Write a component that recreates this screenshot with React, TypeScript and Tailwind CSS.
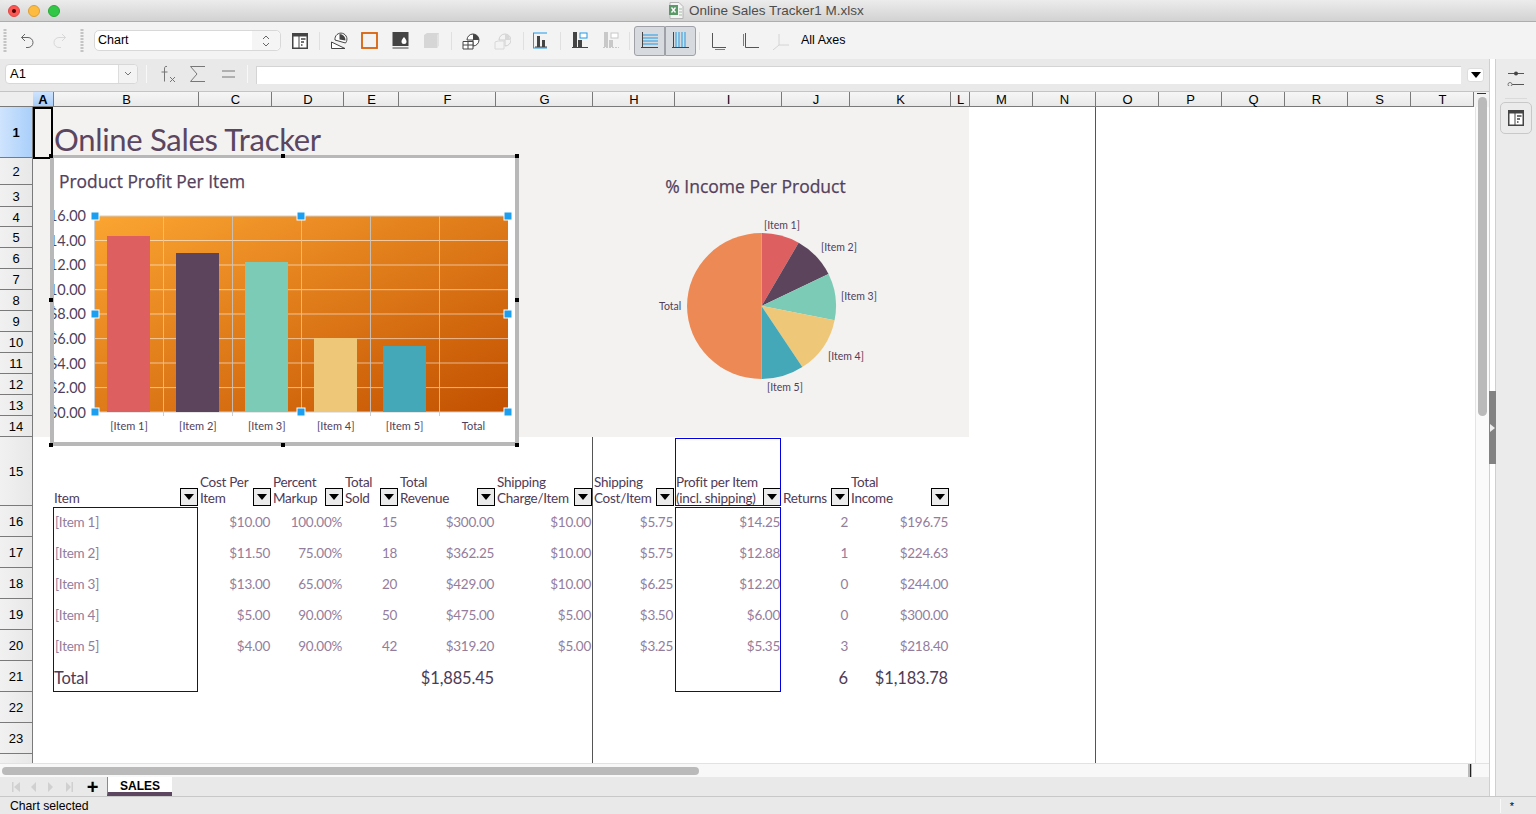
import React from "react";

const SANS = "font-['Liberation_Sans',Arial,sans-serif]";
const cols: [string, number][] = [["A",21],["B",145],["C",73],["D",72],["E",55],["F",97],["G",97],["H",82],["I",107],["J",68],["K",101],["L",19],["M",63],["N",63],["O",63],["P",63],["Q",63],["R",63],["S",63],["T",63]];
const rows = [51,27,22,20,21,21,21,21,21,21,21,21,21,21,69,31,31,31,31,31,31,31,31];

const data = [
  ["[Item 1]","$10.00","100.00%","15","$300.00","$10.00","$5.75","$14.25","2","$196.75"],
  ["[Item 2]","$11.50","75.00%","18","$362.25","$10.00","$5.75","$12.88","1","$224.63"],
  ["[Item 3]","$13.00","65.00%","20","$429.00","$10.00","$6.25","$12.20","0","$244.00"],
  ["[Item 4]","$5.00","90.00%","50","$475.00","$5.00","$3.50","$6.00","0","$300.00"],
  ["[Item 5]","$4.00","90.00%","42","$319.20","$5.00","$3.25","$5.35","3","$218.40"],
];
const headers = [["Item"],["Cost Per","Item"],["Percent","Markup"],["Total","Sold"],["Total","Revenue"],["Shipping","Charge/Item"],["Shipping","Cost/Item"],["Profit per Item","(incl. shipping)"],["Returns"],["Total","Income"]];

function Filter({ last }: { last: boolean }) {
  return (
    <span className={`absolute bottom-0 w-[18px] h-[18px] border border-black bg-[#ebebeb] flex items-center justify-center ${last ? "right-[1px]" : "right-0"}`}>
      <svg width="10" height="6" viewBox="0 0 10 6"><path d="M0 0h10L5 6z" fill="#000" /></svg>
    </span>
  );
}

const Dots = () => (
  <svg width="4" height="24" viewBox="0 0 4 24"><path d="M2 0v24" stroke="#c4c4c4" strokeWidth="3" strokeDasharray="2 1" /></svg>
);
const Sep = ({ c }: { c: string }) => <div className={`w-px h-[18px] bg-[#e0e0e0] ${c}`} />;

const FormatIcon = ({ size = 16 }: { size?: number }) => (
  <svg width={size} height={size} viewBox="0 0 16 16">
    <rect width="16" height="16" fill="#444" />
    <rect x="1.5" y="3.5" width="5" height="11" fill="#fff" />
    <rect x="7.5" y="3.5" width="7" height="11" fill="#fff" />
    <path d="M9 6h4.500M9 9h3M9 12h1.500" stroke="#444" strokeWidth="1.300" />
  </svg>
);

function Ico({ c, w = 18, children }: { c: string; w?: number; children: React.ReactNode }) {
  return <svg className={`shrink-0 ${c}`} width={w} height="18" viewBox={`0 0 ${w} 18`} fill="none">{children}</svg>;
}

function Toolbar() {
  return (
    <div className={`h-[37px] shrink-0 bg-[#f3f3f3] flex items-center ${SANS} text-[12.500px] text-black`}>
      <div className="ml-[3px]"><Dots /></div>
      <Ico c="ml-[11px]"><path d="M7 2 3.500 5.500 7 9" stroke="#666" /><path d="M3.500 5.500H10a5 5 0 0 1 0 10H8" stroke="#666" /></Ico>
      <Ico c="ml-[15px]"><path d="M11 2l3.500 3.500L11 9" stroke="#d8d8d8" /><path d="M14.500 5.500H8a5 5 0 0 0 0 10h2" stroke="#d8d8d8" /></Ico>
      <div className="ml-[11px]"><Dots /></div>
      <div className="ml-[10px] w-[187px] h-[21px] bg-white border border-[#d8d8d8] rounded-[5px] flex items-center pl-[3px] relative">
        <span>Chart</span>
        <span className="ml-auto w-[28px] h-full bg-[#f5f5f5] rounded-r-[5px] flex items-center justify-center">
          <svg width="8" height="14" viewBox="0 0 8 14" fill="none" stroke="#666"><path d="M1 5l3-3 3 3M1 9l3 3 3-3" /></svg>
        </span>
      </div>
      <div className="ml-[11px]"><FormatIcon /></div>
      <Sep c="ml-[11px]" />
      <Ico c="ml-[10px]"><path d="M5 8A6 6 0 1 1 15.500 11z" fill="#fff" stroke="#444" /><path d="M9.500 2A6 6 0 0 1 15.500 8.500L9.500 7.500z" fill="#444" /><path d="M1.500 10 15 16.500H1.500z" fill="#fff" stroke="#444" /></Ico>
      <Ico c="ml-[13px]" w={17}><rect x="1" y="1" width="15" height="15" stroke="#d9610c" strokeWidth="1.800" /></Ico>
      <Ico c="ml-[14px]" w={17}><rect x="0.500" y="0" width="16" height="14" fill="#444" /><path d="M0.500 16h16" stroke="#444" /><path d="M12 5c1.500 2 2.500 3 2.500 4.500a2.500 2.500 0 0 1-5 0C9.500 8 10.500 7 12 5z" fill="#fff" /></Ico>
      <Ico c="ml-[14px]" w={17}><path d="M1 3 4 1h12v12l-2 3H1z" fill="#d6d6d6" /><path d="M14 3v13l2-3V1z" fill="#e2e2e2" /></Ico>
      <Sep c="ml-[11px]" />
      <Ico c="ml-[10px]"><path d="M5 8a6 6 0 1 1 6 6V8z" fill="#fff" stroke="#444" /><path d="M11 2a6 6 0 0 1 6 6h-6z" fill="#444" /><path d="M1 9.500h10v7.500H1zM1 13h10M6 9.500V17" stroke="#444" fill="#fff" /></Ico>
      <Ico c="ml-[13px]"><path d="M6 8a6 6 0 1 1 6 6V8z" stroke="#d0d0d0" /><path d="M12 2a6 6 0 0 1 5 6h-5z" fill="#d8d8d8" /><path d="M2 10l3-1h6v8H2z" stroke="#d8d8d8" /></Ico>
      <Sep c="ml-[12px]" />
      <Ico c="ml-[8px]"><path d="M1 1h14M1 16h14" stroke="#1e9ae8" /><path d="M1.500 1v15" stroke="#1e9ae8" /><path d="M3 15h12" stroke="#444" /><rect x="5" y="4" width="3" height="11" fill="#444" /><rect x="10" y="8" width="3" height="7" fill="#444" /></Ico>
      <Sep c="ml-[10px]" />
      <Ico c="ml-[11px]"><rect x="1" y="0" width="4" height="15" fill="#444" /><rect x="6" y="8" width="4" height="7" fill="#444" /><rect x="8" y="1" width="7" height="5" fill="#fff" stroke="#1e9ae8" /><path d="M0 15.500h16" stroke="#444" /></Ico>
      <Ico c="ml-[13px]"><rect x="1" y="0" width="4" height="15" fill="#c8c8c8" /><rect x="6" y="8" width="4" height="7" fill="#c8c8c8" /><rect x="8" y="1" width="7" height="5" fill="#fff" stroke="#c8c8c8" /><path d="M0 15.500h16" stroke="#c8c8c8" strokeDasharray="2 1" /></Ico>
      <Sep c="ml-[8px]" />
      <div className="ml-[4px] w-[31px] h-[30px] bg-[#d7dade] border border-[#a0a0a8] rounded-l-[3px] flex items-center justify-center">
        <svg width="18" height="18" viewBox="0 0 18 18" fill="none"><path d="M1 3h16M1 6h16M1 9h16M1 12h16" stroke="#1e9ae8" /><path d="M1.500 0v16M0 15.500h17" stroke="#444" /></svg>
      </div>
      <div className="w-[31px] h-[30px] bg-[#d7dade] border border-[#a0a0a8] rounded-r-[3px] flex items-center justify-center">
        <svg width="18" height="18" viewBox="0 0 18 18" fill="none"><path d="M4 0v15M7 0v15M10 0v15M13 0v15" stroke="#1e9ae8" /><path d="M1.500 0v16M0 15.500h17" stroke="#444" /></svg>
      </div>
      <Sep c="ml-[3px]" />
      <Ico c="ml-[11px]"><path d="M1.500 1v14.500H15" stroke="#555" /><path d="M4 17.500h10" stroke="#1e9ae8" /></Ico>
      <Ico c="ml-[12px]"><path d="M4.500 1v14.500H18" stroke="#555" /><path d="M2.500 2v12" stroke="#1e9ae8" /></Ico>
      <Ico c="ml-[12px]"><path d="M8 2v11h10M8 13 2 18" stroke="#d4d4d4" /></Ico>
      <span className="ml-[12px]">All Axes</span>
    </div>
  );
}

function FormulaBar() {
  return (
    <div className={`h-[32px] shrink-0 bg-[#e9e9e9] flex items-center pb-[3px] ${SANS} text-[13px] text-black`}>
      <div className="ml-[5px] w-[133px] h-[20px] bg-white border border-[#d8d8d8] rounded-[4px] flex items-center pl-[4px]">
        <span>A1</span>
        <span className="ml-auto w-[19px] h-full bg-[#f3f3f3] border-l border-[#ddd] flex items-center justify-center rounded-r-[4px]">
          <svg width="8" height="5" viewBox="0 0 8 5" fill="none" stroke="#777"><path d="M1 1l3 3 3-3" /></svg>
        </span>
      </div>
      <div className="ml-[8px] w-px h-[18px] bg-[#f8f8f8]" />
      <svg className="ml-[13px]" width="16" height="18" viewBox="0 0 16 18" fill="none" stroke="#777"><path d="M7 1.500C5 1 4.500 2 4.500 4v12.500M1.500 7h6" /><path d="M10 12l5 5M15 12l-5 5" /></svg>
      <svg className="ml-[13px]" width="17" height="18" viewBox="0 0 17 18" fill="none" stroke="#777"><path d="M16 1.500H1.500L8 9l-6.500 7.500H16" /></svg>
      <svg className="ml-[16px]" width="13" height="10" viewBox="0 0 13 10" fill="none" stroke="#777"><path d="M0 2h13M0 8h13" /></svg>
      <div className="ml-[12px] w-px h-[18px] bg-[#f8f8f8]" />
      <div className="ml-[8px] mt-[3px] w-[1205px] h-[18px] bg-white border-t border-l border-[#d4d4d4]" />
      <div className="ml-[6px] mt-[2px] w-[17px] h-[14px] bg-white rounded-[3px] border border-[#ddd] flex items-center justify-center">
        <svg width="10" height="6" viewBox="0 0 10 6"><path d="M0 0h10L5 6z" fill="#000" /></svg>
      </div>
    </div>
  );
}

function ColumnHeader() {
  return (
    <div className={`h-[16px] shrink-0 flex ${SANS} text-[13px] text-black bg-[#ececec] border-t border-[#c4c4c4]`}>
      <div className="w-[33px] shrink-0 border-b border-[#7a7a7a] bg-[#eee]" />
      {cols.map(([n, w]) => (
        <div key={n} style={{ width: w }} className={`shrink-0 border-r border-b border-[#7a7a7a] flex items-center justify-center leading-none ${n === "A" ? "bg-gradient-to-b from-[#cfe4fd] to-[#a7cdf9] font-bold" : "pl-px bg-gradient-to-b from-[#f6f6f6] to-[#e9e9e9]"}`}>{n}</div>
      ))}
      <div className="flex-1 bg-[#f3f3f3] flex justify-center"><div className="w-[9px] h-px mt-px bg-[#333]" /></div>
    </div>
  );
}

function RowHeader() {
  return (
    <div className={`w-[33px] shrink-0 overflow-hidden ${SANS} text-[13px] text-black`}>
      {rows.map((h, i) => (
        <div key={i} style={{ height: h }} className={`border-b border-r border-[#7a7a7a] flex items-center justify-center pt-[2px] ${i === 0 ? "bg-gradient-to-r from-[#cfe4fd] to-[#a9cffa] font-bold" : "bg-gradient-to-r from-[#f1f1f1] to-[#e8e8e8]"}`}>{i + 1}</div>
      ))}
      <div className="h-[20px] bg-gradient-to-r from-[#f1f1f1] to-[#e8e8e8] border-r border-[#7a7a7a]" />
    </div>
  );
}

function DataTable() {
  const BIG = "text-[16.500px] tracking-[-0.01em] text-[#4f3b57]";
  const cell = (i: number) =>
    i === 0 ? "flex items-center pl-[2px] pt-[2px]" : i === 9 ? "flex items-center justify-end pr-[2px] pt-[2px]" : "flex items-center justify-end pr-px pt-[2px]";
  return (
    <div className="grid grid-cols-[20px_145px_73px_72px_55px_97px_97px_82px_107px_68px_101px] grid-rows-[69px_31px_31px_31px_31px_31px_31px] w-[917px] font-['Lato',sans-serif] text-[13.500px] tracking-[-0.02em]">
      <div />
      {headers.map((h, i) => (
        <div key={i} className={`relative flex flex-col justify-end leading-[16px] text-[#4f3b57] whitespace-nowrap ${i === 0 ? "pl-[1px]" : "pl-[2px]"}`}>
          {h.map((l) => <span key={l}>{l}</span>)}
          <Filter last={i === 9} />
        </div>
      ))}
      {data.map((r) => (
        <React.Fragment key={r[0]}>
          <div />
          {r.map((v, i) => (
            <div key={i} className={`text-[#937d9c] ${cell(i)}`}>{v}</div>
          ))}
        </React.Fragment>
      ))}
      <div />
      <div className={`flex items-center pl-[1px] pt-[4px] ${BIG}`}>Total</div>
      <div /><div /><div />
      <div className={`flex items-center justify-end pr-px pt-[4px] ${BIG}`}>$1,885.45</div>
      <div /><div /><div />
      <div className={`flex items-center justify-end pr-px pt-[4px] ${BIG}`}>6</div>
      <div className={`flex items-center justify-end pr-[2px] pt-[4px] ${BIG}`}>$1,183.78</div>
    </div>
  );
}

function BarChart() {
  const bars = [[107, 236, "#de5f60"], [176, 253, "#5c455c"], [245, 262, "#7ccbb6"], [314, 338, "#eec778"], [383, 346, "#44a8b8"]] as const;
  const gy = [240.5, 265, 289.7, 314, 338.6, 363, 387.6];
  const gx = [163.5, 232.5, 301.5, 370.5, 439.5];
  const yl = ["$16.00", "$14.00", "$12.00", "$10.00", "$8.00", "$6.00", "$4.00", "$2.00", "$0.00"];
  const xl = ["[Item 1]", "[Item 2]", "[Item 3]", "[Item 4]", "[Item 5]", "Total"];
  const handles = [[95, 216], [301, 216], [508, 216], [95, 314], [508, 314], [95, 412], [301, 412], [508, 412]];
  const black = [[51, 156], [283, 156], [517, 156], [51, 300], [517, 300], [51, 445], [283, 445], [517, 445]];
  return (
    <>
      <svg className="absolute left-[21px] top-[51px]" width="461" height="285" viewBox="54 158 461 285">
        <defs>
          <linearGradient id="orange" x1="0" y1="0" x2="1" y2="1">
            <stop offset="0" stopColor="#fba532" />
            <stop offset="1" stopColor="#c25000" />
          </linearGradient>
        </defs>
        <rect x="54" y="158" width="461" height="285" fill="#fff" />
        <rect x="95" y="216" width="413" height="196" fill="url(#orange)" />
        <path d="M95 216H508M95 412H508M94.500 216V412" stroke="#cfcfcf" fill="none" />
        {gy.map((y) => <path key={y} d={`M95 ${y}H508`} stroke="#fff" strokeOpacity=".55" />)}
        {gx.map((x) => <path key={x} d={`M${x} 216V416`} stroke="#c8c8c8" strokeOpacity=".85" />)}
        {bars.map(([x, y, c]) => <rect key={x} x={x} y={y} width="43" height={412 - y} fill={c} />)}
        {yl.map((t, i) => <text key={t} x="86" y={221 + i * 24.6} textAnchor="end" fontSize="14.500" fill="#4f3f5c" fontFamily="Lato">{t}</text>)}
        {xl.map((t, i) => <text key={t} x={129 + i * 68.9} y="430" textAnchor="middle" fontSize="11" fill="#4f3f5c" fontFamily="Lato">{t}</text>)}
        <text x="59" y="188" fontSize="17.400" stroke="#54415c" strokeWidth=".25" fill="#54415c" fontFamily="Open Sans">Product Profit Per Item</text>
        {handles.map(([x, y]) => <rect key={`${x}-${y}`} x={x - 4} y={y - 4} width="8" height="8" fill="#1c9ff0" stroke="#fff" />)}
      </svg>
      <div className="absolute left-[17px] top-[48px] w-[469px] h-[291px] border-x-4 border-t-[3px] border-b-4 border-[#b8b8b8] pointer-events-none" />
      {black.map(([x, y]) => <span key={`${x}-${y}`} style={{ left: x - 33 - 2, top: y - 107 - 2 }} className="absolute w-[4px] h-[4px] bg-black" />)}
    </>
  );
}

function PieChart() {
  const vals = [196.75, 224.63, 244, 300, 218.4, 1183.78];
  const colors = ["#de5f60", "#5c455c", "#7ccbb6", "#eec778", "#44a8b8", "#ed8955"];
  const sum = vals.reduce((a, b) => a + b, 0);
  const cx = 761.5, cy = 306, rx = 74.5, ry = 73;
  let a = 0;
  const pt = (d: number) => [cx + rx * Math.sin((d * Math.PI) / 180), cy - ry * Math.cos((d * Math.PI) / 180)];
  const labels: [string, number, number][] = [["[Item 1]", 764, 229], ["[Item 2]", 821, 251], ["[Item 3]", 841, 300], ["[Item 4]", 828, 360], ["[Item 5]", 767, 391], ["Total", 659, 310]];
  return (
    <svg className="absolute left-[607px] top-[63px]" width="260" height="230" viewBox="640 170 260 230">
      {vals.map((v, i) => {
        const d = (v / sum) * 360;
        const [x1, y1] = pt(a);
        const [x2, y2] = pt(a + d);
        const large = d > 180 ? 1 : 0;
        a += d;
        return <path key={i} d={`M${cx} ${cy}L${x1} ${y1}A${rx} ${ry} 0 ${large} 1 ${x2} ${y2}z`} fill={colors[i]} />;
      })}
      <text x="755.500" y="193" textAnchor="middle" fontSize="17.500" stroke="#54415c" strokeWidth=".25" fill="#54415c" fontFamily="Open Sans">% Income Per Product</text>
      {labels.map(([t, x, y]) => <text key={t} x={x} y={y} fontSize="10.500" fill="#4f3f5c" fontFamily="Lato">{t}</text>)}
    </svg>
  );
}

function Sheet() {
  return (
    <div className="relative w-[1442px] overflow-hidden bg-white">
      <div className="w-[936px] h-[330px] bg-[#f3f2f0] pl-[21px]">
        <h1 className="pt-[12px] text-[31px] leading-[40px] tracking-[-0.01em] text-[#5a4660] font-['Lato',sans-serif] whitespace-nowrap">Online Sales Tracker</h1>
      </div>
      <DataTable />
      <div className="absolute left-0 top-0 w-[20px] h-[52px] border-2 border-black" />
      <div className="absolute left-[559px] top-[330px] bottom-0 w-px bg-[#555]" />
      <div className="absolute left-[1062px] top-0 bottom-0 w-px bg-[#555]" />
      <div className="absolute left-[20px] top-[400px] w-[145px] h-[185px] border border-[#0000e0]" />
      <div className="absolute left-[642px] top-[331px] w-[106px] h-[68px] border border-[#0000e0]" />
      <div className="absolute left-[642px] top-[400px] w-[106px] h-[185px] border border-[#0000e0]" />
      <BarChart />
      <PieChart />
    </div>
  );
}

function VScroll() {
  return (
    <div className="w-[14px] bg-[#fafafa] border-l border-[#e4e4e4] flex justify-center">
      <div className="w-[9px] h-[319px] mt-[-10px] bg-[#bababa] rounded-full" />
    </div>
  );
}

function Tabs() {
  const G = "#d0d0d0";
  return (
    <div className={`h-[19px] shrink-0 bg-[#e9e9e9] flex items-center ${SANS}`}>
      <svg className="ml-[11px]" width="66" height="12" viewBox="0 0 66 12" fill={G}>
        <path d="M1 1h1.500v10H1zM9 1v10L3 6zM25 1v10l-5-5zM37 1v10l5-5zM55 1v10l5-5zM60.500 1H62v10h-1.500z" />
      </svg>
      <span className="ml-[8px] text-[20px] font-bold leading-none text-black w-[15px] text-center">+</span>
      <div className="ml-[7px] w-[65px] h-[19px] bg-white border-l border-[#8a8a8a] border-b-4 border-b-[#5d4660] flex items-center justify-center pt-[2px] text-[12px] font-bold text-black leading-none">SALES</div>
    </div>
  );
}

function Sidebar() {
  return (
    <>
      <div className="w-[7px] bg-white border-x border-[#cfcfcf] flex flex-col">
        <div className="h-[332px] shrink-0" />
        <div className="h-[73px] shrink-0 bg-[#828282] -mx-px flex items-center justify-center">
          <svg width="5" height="8" viewBox="0 0 5 8"><path d="M0 0l5 4-5 4z" fill="#eee" /></svg>
        </div>
      </div>
      <div className="w-[40px] bg-[#ebebeb] flex flex-col items-center">
        <svg className="mt-[12px]" width="18" height="15" viewBox="0 0 18 15" fill="none">
          <path d="M1 2.500h16" stroke="#555" /><circle cx="9" cy="2.500" r="2" fill="#444" />
          <path d="M5 13.500h12" stroke="#555" /><circle cx="3" cy="13.500" r="2" fill="#eee" stroke="#777" />
        </svg>
        <div className="mt-[12px] w-[22px] h-px bg-[#dadada]" />
        <div className="mt-[3px] w-[32px] h-[32px] border border-[#c8c8c8] rounded-[5px] flex items-center justify-center">
          <FormatIcon />
        </div>
      </div>
    </>
  );
}

export default function App() {
  return (
    <div className={`w-[1536px] h-[814px] flex flex-col overflow-hidden bg-[#e9e9e9] ${SANS}`}>
      <div className="h-[22px] shrink-0 rounded-t-[5px] bg-gradient-to-b from-[#ececec] to-[#d2d2d2] border-b border-[#adadad] flex items-center relative text-[13.500px] text-[#4d4d4d]">
        <div className="flex gap-[8px] ml-[8px]">
          <span className="w-[12px] h-[12px] rounded-full bg-[#fc5753] border border-[#df4744] flex items-center justify-center"><span className="w-[4px] h-[4px] rounded-full bg-[#4d0000]" /></span>
          <span className="w-[12px] h-[12px] rounded-full bg-[#fdbc40] border border-[#de9f34]" />
          <span className="w-[12px] h-[12px] rounded-full bg-[#33c748] border border-[#27aa35]" />
        </div>
        <div className="ml-[609px] flex items-center gap-[5px]">
          <svg width="15" height="17" viewBox="0 0 15 17">
            <path d="M1 .500h9l4 4v12H1z" fill="#f4f4f4" stroke="#b4b4b4" />
            <rect x="0" y="3" width="9" height="10" fill="#5b9a68" />
            <path d="M10 7h3M10 10h3M10 13h3" stroke="#9dbfa3" />
            <path d="M2.500 5.500l4 5M6.500 5.500l-4 5" stroke="#fff" strokeWidth="1.300" />
          </svg>
          <span className="whitespace-nowrap pt-[2px]">Online Sales Tracker1 M.xlsx</span>
        </div>
      </div>
      <Toolbar />
      <div className="flex h-[737px] shrink-0">
        <div className="w-[1489px] flex flex-col">
          <FormulaBar />
          <ColumnHeader />
          <div className="flex h-[656px] shrink-0">
            <RowHeader />
            <Sheet />
            <VScroll />
          </div>
          <div className="h-[14px] shrink-0 bg-[#f8f8f8] border-t border-[#e2e2e2] flex items-center pl-[2px]">
            <div className="w-[697px] h-[8px] rounded-full bg-[#bababa]" />
            <div className="ml-[769px] w-[4px] h-[13px] bg-[#bababa] flex justify-center"><div className="w-px h-full bg-[#222]" /></div>
          </div>
          <Tabs />
        </div>
        <Sidebar />
      </div>
      <div className="h-[18px] shrink-0 border-t border-[#c8c8c8] bg-[#e9e9e9] flex items-center pt-px text-[12.200px] leading-none text-black pl-[10px]">
        <span>Chart selected</span>
        <div className="ml-auto w-px h-[14px] bg-[#f8f8f8]" />
        <span className="ml-[9px] mr-[22px] text-[11px] leading-none">*</span>
      </div>
    </div>
  );
}
